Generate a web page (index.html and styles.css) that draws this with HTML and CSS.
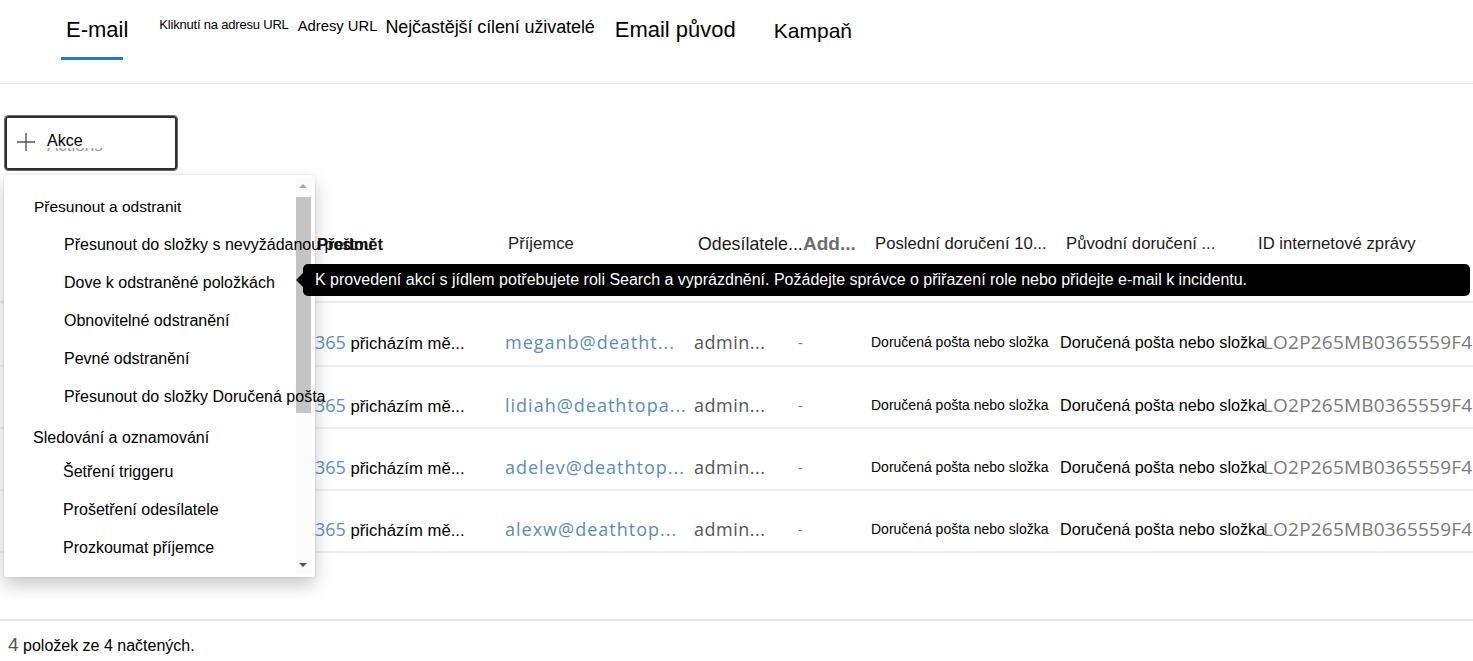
FILE: index.html
```html
<!DOCTYPE html>
<html lang="cs">
<head>
<meta charset="utf-8">
<link rel="stylesheet" href="styles.css">
</head>
<body>
<nav class="tabs">
  <div class="tab tab-email"><span>E-mail</span><i class="underline"></i></div>
  <div class="tab tab-click">Kliknutí na adresu URL</div>
  <div class="tab tab-urls">Adresy URL</div>
  <div class="tab tab-top">Nejčastější cílení uživatelé</div>
  <div class="tab tab-origin">Email původ</div>
  <div class="tab tab-camp">Kampaň</div>
</nav>

<div class="toolbar">
  <button class="actions-btn">
    <svg class="plus" width="18" height="18" viewBox="0 0 18 18"><path d="M9 0v18M0 9h18" stroke="#555" stroke-width="1.4" fill="none"/></svg>
    <span class="ghost">Actions</span>
    <span class="label">Akce</span>
  </button>
</div>

<section class="table">
  <div class="row head">
    <div class="cell"></div>
    <div class="cell h-subj">Předmět</div>
    <div class="cell h-rec">Příjemce</div>
    <div class="cell h-send">Odesílatele...</div>
    <div class="cell h-add">Add...</div>
    <div class="cell h-last">Poslední doručení 10...</div>
    <div class="cell h-orig">Původní doručení ...</div>
    <div class="cell h-id">ID internetové zprávy</div>
  </div>
  <div class="row data first">
    <div class="cell"></div>
    <div class="cell subj"><span class="num">365</span> přicházím mě...</div>
    <div class="cell mail">meganb@deatht...</div>
    <div class="cell admin">admin...</div>
    <div class="cell dash">-</div>
    <div class="cell small">Doručená pošta nebo složka</div>
    <div class="cell folder">Doručená pošta nebo složka</div>
    <div class="cell msgid">LO2P265MB0365559F45</div>
  </div>
  <div class="row data">
    <div class="cell"></div>
    <div class="cell subj"><span class="num">365</span> přicházím mě...</div>
    <div class="cell mail">lidiah@deathtopa...</div>
    <div class="cell admin">admin...</div>
    <div class="cell dash">-</div>
    <div class="cell small">Doručená pošta nebo složka</div>
    <div class="cell folder">Doručená pošta nebo složka</div>
    <div class="cell msgid">LO2P265MB0365559F45</div>
  </div>
  <div class="row data">
    <div class="cell"></div>
    <div class="cell subj"><span class="num">365</span> přicházím mě...</div>
    <div class="cell mail">adelev@deathtop...</div>
    <div class="cell admin">admin...</div>
    <div class="cell dash">-</div>
    <div class="cell small">Doručená pošta nebo složka</div>
    <div class="cell folder">Doručená pošta nebo složka</div>
    <div class="cell msgid">LO2P265MB0365559F45</div>
  </div>
  <div class="row data">
    <div class="cell"></div>
    <div class="cell subj"><span class="num">365</span> přicházím mě...</div>
    <div class="cell mail">alexw@deathtop...</div>
    <div class="cell admin">admin...</div>
    <div class="cell dash">-</div>
    <div class="cell small">Doručená pošta nebo složka</div>
    <div class="cell folder">Doručená pošta nebo složka</div>
    <div class="cell msgid">LO2P265MB0365559F45</div>
  </div>
</section>

<footer class="footer"><span class="count">4</span> položek ze 4 načtených.</footer>

<div class="menu">
  <div class="scrollbar">
    <span class="arrow up"></span>
    <span class="thumb"></span>
    <span class="arrow down"></span>
  </div>
  <ul class="menu-list">
    <li class="group">Přesunout a odstranit</li>
    <li class="item">Přesunout do složky s nevyžádanou poštou</li>
    <li class="item">Dove k odstraněné položkách</li>
    <li class="item">Obnovitelné odstranění</li>
    <li class="item">Pevné odstranění</li>
    <li class="item">Přesunout do složky Doručená pošta</li>
    <li class="group g2">Sledování a oznamování</li>
    <li class="item i2">Šetření triggeru</li>
    <li class="item i2">Prošetření odesílatele</li>
    <li class="item i2">Prozkoumat příjemce</li>
    <li class="item i2">Aktivovat automatické šetření</li>
  </ul>
</div>

<div class="tooltip">K provedení akcí s jídlem potřebujete roli Search a vyprázdnění. Požádejte správce o přiřazení role nebo přidejte e-mail k incidentu.</div>
</body>
</html>
```

FILE: styles.css
```css
* { box-sizing: border-box; }
html, body { margin: 0; padding: 0; }
body {
  width: 1473px;
  height: 661px;
  overflow: hidden;
  background: #fff;
  font-family: "Liberation Sans", Arial, sans-serif;
  color: #000;
  position: relative;
}

/* Tabs */
.tabs {
  display: flex;
  align-items: flex-start;
  height: 84px;
  border-bottom: 1px solid #e6e6e6;
  padding-left: 61px;
}
.tab { white-space: nowrap; line-height: 1; }
.tab-email {
  display: flex;
  flex-direction: column;
  font-size: 22px;
  padding-top: 19px;
}
.tab-email span { padding-left: 5px; }
.underline {
  display: block;
  width: 62px;
  height: 3px;
  background: #2b78bd;
  margin-top: 16px;
}
.tab-click { font-size: 13px; margin-left: 31px; padding-top: 18px; letter-spacing: -0.2px; }
.tab-urls { font-size: 14.8px; margin-left: 9px; padding-top: 19px; }
.tab-top { font-size: 18px; font-weight: 500; margin-left: 8px; padding-top: 18px; letter-spacing: -0.1px; }
.tab-origin { font-size: 22px; margin-left: 20px; padding-top: 19px; }
.tab-camp { font-size: 21px; margin-left: 38px; padding-top: 20px; }

/* Toolbar */
.toolbar { padding: 32px 0 0 5px; }
.actions-btn {
  position: relative;
  width: 172px;
  height: 54px;
  background: #fff;
  border: 2px solid #2f2f2f;
  border-radius: 3px;
  outline: 1px solid #6b6b6b;
  outline-offset: 0;
  display: flex;
  align-items: center;
  padding: 0 0 0 10px;
  font-family: inherit;
  cursor: pointer;
}
.plus { margin-top: -2px; }
.ghost {
  position: absolute;
  left: 40px;
  top: 18px;
  font-size: 17px;
  color: #9a9a9a;
}
.label {
  position: relative;
  font-size: 16px;
  line-height: 14px;
  height: 14px;
  margin-left: 12px;
  margin-top: -4px;
  padding-right: 30px;
  color: #000;
  background: #fff;
}

/* Table */
.table { display: flex; flex-direction: column; }
.row {
  display: grid;
  grid-template-columns: 315px 190px 189px 104px 73px 189px 203px 1fr;
  white-space: nowrap;
}
.cell { overflow: visible; }
.head {
  height: 133px;
  padding-top: 63px;
  border-bottom: 2px solid #ececec;
  font-size: 16.7px;
  line-height: 22px;
  color: #1a1a1a;
}
.h-subj { font-weight: bold; padding-left: 2px; font-size: 16.5px; }
.h-rec { padding-left: 3px; color: #222; }
.h-send { padding-left: 4px; font-size: 17.8px; }
.h-add { padding-left: 5px; font-weight: bold; color: #6e6e6e; font-size: 19px; }
.h-last { padding-left: 4px; }
.h-orig { padding-left: 6px; }
.h-id { margin-left: -5px; }

.data {
  height: 62px;
  padding-top: 27px;
  border-bottom: 2px solid #efefef;
  line-height: 22px;
  font-size: 16.7px;
}
.data.first { height: 64px; padding-top: 28px; }
.subj { color: #000; }
.num { color: #5f8fbd; font-family: "Open Sans", sans-serif; font-size: 18px; }
.mail { color: #5a8db9; font-family: "Open Sans", sans-serif; font-size: 18px; letter-spacing: 1px; }
.admin { color: #555; font-family: "Open Sans", sans-serif; font-size: 18px; letter-spacing: 0.5px; }
.dash { color: #777; font-family: "Open Sans", sans-serif; font-size: 15px; }
.small { font-size: 14px; }
.folder { font-size: 16.2px; }
.msgid { color: #7a7a7a; font-family: "Open Sans", sans-serif; font-size: 19px; letter-spacing: 0.2px; }

/* Footer */
.footer {
  margin-top: 66px;
  border-top: 2px solid #e6e6e6;
  padding: 13px 0 0 8px;
  font-size: 16px;
  line-height: 22px;
}
.count { font-size: 19px; color: #555; }

/* Dropdown menu */
.menu {
  position: absolute;
  left: 4px;
  top: 175px;
  width: 311px;
  height: 402px;
  background: #fff;
  border-radius: 3px;
  box-shadow: 0 8px 18px rgba(0,0,0,0.22), 0 0 2px rgba(0,0,0,0.15);
}
.scrollbar {
  position: absolute;
  right: 3px;
  top: 3px;
  bottom: 3px;
  width: 17px;
  background: #fbfbfb;
}
.thumb {
  position: absolute;
  left: 1px;
  right: 1px;
  top: 19px;
  height: 216px;
  background: #c4c4c4;
}
.arrow {
  position: absolute;
  left: 4px;
  width: 0; height: 0;
  border-left: 4px solid transparent;
  border-right: 4px solid transparent;
}
.arrow.up { top: 6px; border-bottom: 4px solid #a8a8a8; }
.arrow.down { bottom: 7px; border-top: 4px solid #505050; }

.menu-list {
  position: relative;
  list-style: none;
  margin: 0;
  padding: 13px 0 0 0;
  height: 402px;
  clip-path: inset(0 -400px 0 0);
  font-size: 16px;
  color: #000;
}
.menu-list li { height: 38px; line-height: 38px; white-space: nowrap; }
.group { padding-left: 30px; font-size: 15.5px; }
.item { padding-left: 60px; }
.g2 { padding-left: 29px; margin-top: 3px; font-size: 16px; }
.i2 { padding-left: 59px; }
.g2 + .i2 { margin-top: -4px; }

/* Tooltip */
.tooltip {
  position: absolute;
  left: 303px;
  top: 264px;
  width: 1167px;
  height: 32px;
  background: #000;
  color: #fff;
  border-radius: 5px;
  font-size: 16px;
  line-height: 32px;
  padding-left: 12px;
  white-space: nowrap;
}
.tooltip::before {
  content: "";
  position: absolute;
  left: -7px;
  top: 9px;
  border-top: 7px solid transparent;
  border-bottom: 7px solid transparent;
  border-right: 7px solid #000;
}
```
